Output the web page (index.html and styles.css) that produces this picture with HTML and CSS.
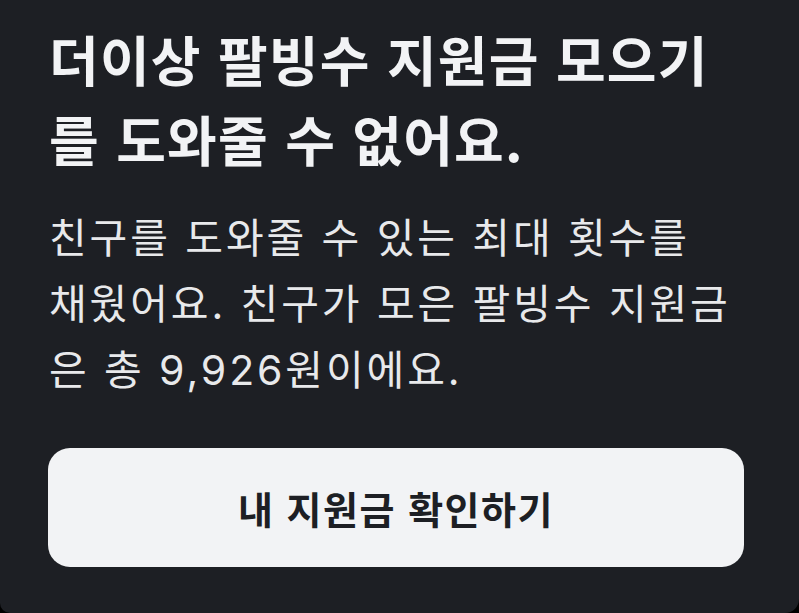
FILE: index.html
```html
<!DOCTYPE html>
<html lang="ko">
<head>
<meta charset="utf-8">
<link rel="stylesheet" href="styles.css">
</head>
<body>
<div class="sheet">
  <h1 class="title">더이상 팔빙수 지원금 모으기<br>를 도와줄 수 없어요.</h1>
  <p class="desc">친구를 도와줄 수 있는 최대 횟수를<br>채웠어요. 친구가 모은 팔빙수 지원금<br>은 총 9,926원이에요.</p>
  <button class="btn">내 지원금 확인하기</button>
</div>
</body>
</html>
```
FILE: styles.css
```css
html, body {
  margin: 0;
  padding: 0;
  background: #000;
  width: 799px;
  height: 613px;
  overflow: hidden;
}
.sheet {
  box-sizing: border-box;
  width: 799px;
  height: 613px;
  background: #1d1f24;
  border-radius: 0 0 14px 10px;
  padding: 19px 55px 0 48px;
  display: flex;
  flex-direction: column;
}
.title {
  margin: 0;
  font-family: "Noto Sans CJK KR", sans-serif;
  font-weight: 700;
  font-size: 54px;
  line-height: 80px;
  letter-spacing: 1.2px;
  color: #f2f3f5;
  padding-left: 1px;
}
.desc {
  margin: 26px 0 0;
  font-family: "Inter", "Noto Sans CJK KR", sans-serif;
  font-weight: 400;
  font-size: 41px;
  line-height: 66px;
  letter-spacing: 2.9px;
  color: #e8e9eb;
  padding-left: 1px;
}
.btn {
  margin-top: 45px;
  height: 119px;
  width: 100%;
  border: none;
  border-radius: 22px;
  background: #f2f3f5;
  color: #1d1f24;
  font-family: "Noto Sans CJK KR", sans-serif;
  font-weight: 700;
  font-size: 38px;
  letter-spacing: 1.5px;
  padding: 0;
}
```
